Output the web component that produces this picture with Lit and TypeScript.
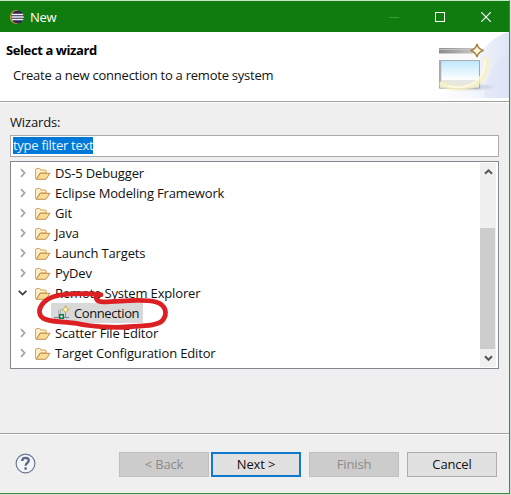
import { LitElement, html, css, svg } from "lit";
import { customElement } from "lit/decorators.js";

interface Row { label: string; kind: "closed" | "open" | "child" }

const ROWS: Row[] = [
  { label: "DS-5 Debugger", kind: "closed" },
  { label: "Eclipse Modeling Framework", kind: "closed" },
  { label: "Git", kind: "closed" },
  { label: "Java", kind: "closed" },
  { label: "Launch Targets", kind: "closed" },
  { label: "PyDev", kind: "closed" },
  { label: "Remote System Explorer", kind: "open" },
  { label: "Connection", kind: "child" },
  { label: "Scatter File Editor", kind: "closed" },
  { label: "Target Configuration Editor", kind: "closed" },
];

const folder = html`<svg class="folder" width="16" height="14" viewBox="0 0 16 14">
  <path d="M.6 11.500V3Q.6 1.500 1.600 1.500H4.600Q5.500 1.500 5.800 3H10.200Q11.200 3 11.200 4V6H5L1.500 12Z" fill="#fdf0c8" stroke="#c79a55" stroke-width=".9"/>
  <path d="M1.300 12.300 5.400 6.300H15L10.800 12.300Z" fill="#fbdc96" stroke="#b88640" stroke-width=".9"/>
</svg>`;

const connection = html`<svg class="conn" width="16" height="16" viewBox="0 0 16 16">
  <path d="M0 12.500H15" stroke="#7a8b9c" stroke-width="1.200"/>
  <path d="M4.500 5V12M6.500 4V9" stroke="#a4aeb4"/>
  <path d="M11.500 8V12" stroke="#8295a5"/>
  <rect x="5.700" y="9.700" width="3.600" height="3.600" fill="#dcf2e2" stroke="#14794a" stroke-width="1.500"/>
  <path d="M11.500 .8 12.700 3.300 15.200 4.500 12.700 5.700 11.500 8.200 10.300 5.700 7.800 4.500 10.300 3.300Z" fill="#fffbd8" stroke="#c5a136" stroke-width=".9"/>
</svg>`;

const chevron = (open: boolean) => html`<svg class="chev" width="10" height="10" viewBox="0 0 10 10">
  ${open
    ? svg`<path d="M.8 2.800 4.600 6.600 8.400 2.800" fill="none" stroke="#404040" stroke-width="1.800"/>`
    : svg`<path d="M3 1.200 6.600 5 3 8.800" fill="none" stroke="#a6a6a6" stroke-width="1.800"/>`}
</svg>`;

@customElement("app-root")
export class AppRoot extends LitElement {
  static styles = css`
    :host { display: block; width: 511px; height: 495px; overflow: hidden; background: #d3ddd3;
      font: 13px/20px "Open Sans", "Noto Sans", sans-serif; color: #111; letter-spacing: -.15px; }
    * { box-sizing: border-box; }
    svg { display: block; flex: none; }
    .window { width: 510px; height: 494px; position: relative; display: flex; flex-direction: column;
      border-top: 1px solid #c4e6c4; border-right: 1px solid #3f8c3f; border-bottom: 1px solid #3f8c3f; background: #efefef; }
    .title { height: 31px; flex: none; background: #107c10; color: #fff; display: flex; align-items: center; padding-left: 9px; }
    .title span { margin-left: 5px; flex: 1; letter-spacing: -.3px; }
    .caption { width: 46px; display: flex; justify-content: center; }
    .head { height: 71px; flex: none; background: #fff; border-bottom: 1px solid #fff; display: flex; box-shadow: inset 0 -1px #a0a0a0; }
    .texts { flex: 1; padding: 8px 0 0 6px; white-space: nowrap; }
    .strong { font-weight: 700; color: #000; letter-spacing: -.4px; }
    .sub { padding: 5px 0 0 7px; letter-spacing: -.24px; }
    .main { height: 332px; flex: none; padding: 9px 10px 0; border-bottom: 1px solid #fff; box-shadow: inset 0 -1px #a0a0a0; }
    .field { height: 22px; margin-top: 3px; border: 1px solid #a9a9a9; background: #fff; padding: 1px 2px; display: flex; }
    .sel { background: #0078d7; color: #e9f4ff; height: 17px; line-height: 17px; letter-spacing: -.27px; }
    .list { height: 208px; margin-top: 4px; border: 1px solid #828790; background: #fff; padding: 1px; display: flex; }
    .rows { flex: 1; }
    .row { height: 20px; display: flex; align-items: center; padding-left: 6px; white-space: nowrap; }
    .folder { margin: 2px 0 0 7px; }
    .label { margin-left: 4px; }
    .child { padding-left: 39px; letter-spacing: -.4px; }
    .picked { display: flex; align-items: center; height: 20px; background: #d9d9d9; padding: 0 4px 0 3px; }
    .bar { width: 16px; background: #f0f0f0; display: flex; flex-direction: column; align-items: center; margin-right: 1px; }
    .thumb { width: 15px; height: 121px; background: #cdcdcd; align-self: flex-start; margin-top: 48px; }
    .arrow { height: 17px; display: flex; align-items: center; }
    .foot { flex: 1; display: flex; align-items: flex-start; padding: 17px 12px 0 15px; }
    .help { margin-top: 1px; }
    .btn { width: 90px; height: 25px; border: 1px solid #adadad; background: #e1e1e1; color: #111; text-align: center; line-height: 23px; }
    .off { background: #ccc; border-color: #bfbfbf; color: #8b8b8b; }
    .back { margin-left: 83px; }
    .next { margin-left: 2px; border: 2px solid #1078ce; line-height: 21px; }
    .gap { margin-left: 8px; }
    .mark { position: absolute; left: 30px; top: 285px; }
  `;

  render() {
    return html`<div class="window">
      <div class="title">
        <svg width="16" height="14" viewBox="0 0 16 14">
          <path d="M8 0A7 7 0 0 0 8 14L10 13V1Z" fill="#f29a35"/>
          <circle cx="8.600" cy="7" r="6.400" fill="#2b2551"/>
          <path d="M3 4.500H14.300M2.500 7H14.800M3 9.500H14.300" stroke="#f3f2f8" stroke-width="1.300"/>
        </svg>
        <span>New</span>
        <div class="caption"><svg width="10" height="10"><path d="M0 5.500H10" stroke="#3d993d"/></svg></div>
        <div class="caption"><svg width="10" height="10"><rect x=".5" y=".5" width="9" height="9" fill="none" stroke="#fff"/></svg></div>
        <div class="caption"><svg width="10" height="10"><path d="M0 0 10 10M10 0 0 10" stroke="#fff" stroke-width="1.200"/></svg></div>
      </div>
      <div class="head">
        <div class="texts"><div class="strong">Select a wizard</div><div class="sub">Create a new connection to a remote system</div></div>
        ${this.banner()}
      </div>
      <div class="main">
        <div class="wiz">Wizards:</div>
        <div class="field"><span class="sel">type filter text</span></div>
        <div class="list">
          <div class="rows">${ROWS.map((r) => this.row(r))}</div>
          <div class="bar">
            <div class="arrow"><svg width="9" height="8" viewBox="0 0 9 8"><path d="M1 5.800 4.500 2.300 8 5.800" fill="none" stroke="#555" stroke-width="2"/></svg></div>
            <div class="thumb"></div>
            <div class="arrow"><svg width="9" height="8" viewBox="0 0 9 8"><path d="M1 2.300 4.500 5.800 8 2.300" fill="none" stroke="#555" stroke-width="2"/></svg></div>
          </div>
        </div>
      </div>
      <div class="foot">
        <svg class="help" width="21" height="21" viewBox="0 0 21 21">
          <circle cx="10.500" cy="10.500" r="9.400" fill="#f4f5f9" stroke="#6c7893" stroke-width="1.200"/>
          <path d="M7.200 8Q7.200 4.800 10.600 4.800 13.800 4.800 13.800 7.600C13.800 9.800 10.600 10 10.600 12.800" fill="none" stroke="#58678a" stroke-width="2.300"/>
          <rect x="9.400" y="14.300" width="2.400" height="2.400" fill="#58678a"/>
        </svg>
        <div class="btn off back">&lt; Back</div>
        <div class="btn next">Next &gt;</div>
        <div class="btn off gap">Finish</div>
        <div class="btn gap">Cancel</div>
      </div>
      <svg class="mark" width="145" height="50" viewBox="30 286 145 50">
        <path d="M101 294.700C84 293 64 293.500 54 296.500C43 300 37 309 40.500 315.500C45 323 63 321 77 323.500C90 326.500 115 328.500 133 326.500C149 325.500 158 325 162.500 320.500C168 313.500 166 305 156 302C143 298.500 122 301.500 103 301.800Q97 302 96 297.500" fill="none" stroke="#dd2023" stroke-width="4.800" stroke-linecap="round" stroke-linejoin="round"/>
      </svg>
    </div>`;
  }

  private row(r: Row) {
    const label = html`<span class="label">${r.label}</span>`;
    if (r.kind === "child") return html`<div class="row child"><div class="picked">${connection}${label}</div></div>`;
    return html`<div class="row">${chevron(r.kind === "open")}${folder}${label}</div>`;
  }

  private banner() {
    return html`<svg width="79" height="66" viewBox="430 32 79 66">
      <defs>
        <linearGradient id="sky" x1="0" y1="0" x2="0" y2="1"><stop offset="0" stop-color="#bfe6fb"/><stop offset="1" stop-color="#fff"/></linearGradient>
        <linearGradient id="bar"><stop offset="0" stop-color="#8c8c8c"/><stop offset="1" stop-color="#d0d0d0"/></linearGradient>
        <linearGradient id="wash"><stop offset="0" stop-color="#fff"/><stop offset=".5" stop-color="#f6f8fd"/><stop offset="1" stop-color="#dfe5f6"/></linearGradient>
        <radialGradient id="shade"><stop offset="0" stop-color="#8c93a8" stop-opacity=".6"/><stop offset="1" stop-color="#8c93a8" stop-opacity="0"/></radialGradient>
        <filter id="soft"><feGaussianBlur stdDeviation="1"/></filter>
      </defs>
      <path d="M430 98C462 94 475 40 509 32V98Z" fill="url(#wash)"/>
      <path d="M484 98C486 75 494 60 509 55V98Z" fill="#d9e1f5" opacity=".5"/>
      <ellipse cx="470" cy="87" rx="26" ry="4.500" fill="url(#shade)"/>
      <rect x="439" y="48" width="41" height="40" fill="#fafafa"/>
      <rect x="439" y="48" width="41" height="5.500" fill="url(#bar)"/>
      <path d="M439 49.500H480" stroke="#c3c3c3"/>
      <path d="M439.500 60V88.200H479.500V60" fill="#e6e6e2" stroke="#a6a6a6"/>
      <rect x="440" y="60.500" width="39" height="19.500" fill="url(#sky)"/>
      <path d="M439 60.500H480" stroke="#a8aeb1" stroke-width="1.200"/>
      <path d="M440.500 60V82" stroke="#a8aeb1" stroke-width="1.500"/>
      <path d="M440 83C453 91 477 90 484 75Q489 66 485 57" fill="none" stroke="#f8f2c0" stroke-width="5" opacity=".85" filter="url(#soft)"/>
      <path d="M448 86C467 91 486 81 485 59" fill="none" stroke="#fffdef" stroke-width="1.500" opacity=".8"/>
      <path d="M477 44Q478.300 49.200 483.500 50.500 478.300 51.800 477 57 475.700 51.800 470.500 50.500 475.700 49.200 477 44Z" fill="#fff8df" stroke="#a5803f" stroke-width="1.400"/>
    </svg>`;
  }
}
